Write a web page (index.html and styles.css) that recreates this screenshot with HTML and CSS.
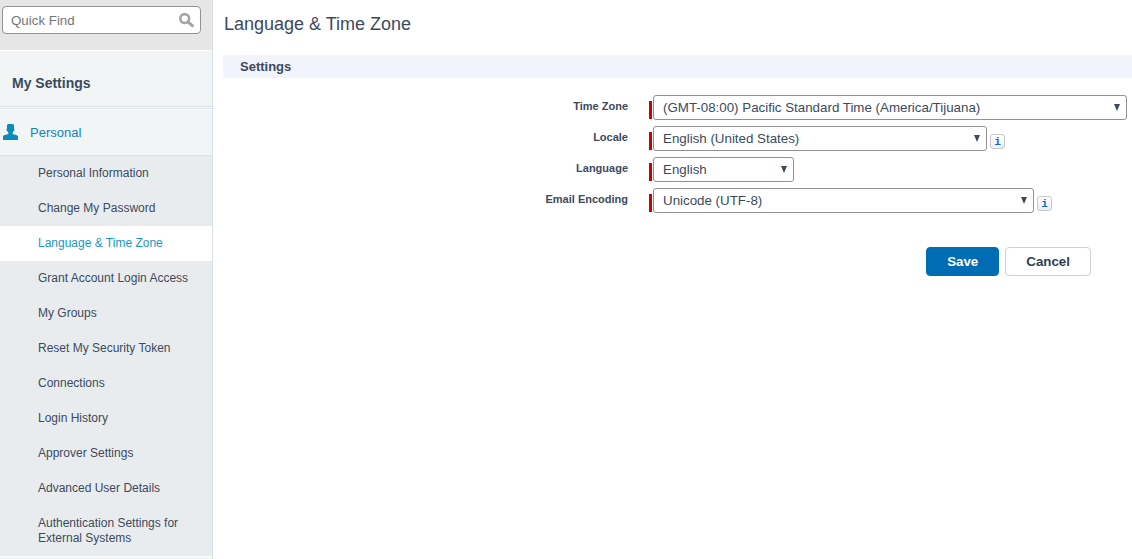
FILE: index.html
```html
<!doctype html>
<html lang="en">
<head>
    <meta charset="UTF-8">
    <meta name="viewport" content="width=device-width, initial-scale=1.0">
    <title>Language &amp; Time Zone</title>
    <link rel="stylesheet" href="styles.css">
</head>
<body>
<div class="page">
    <aside class="sidebar">
        <form class="search">
            <input type="search" class="searchInput" placeholder="Quick Find" aria-label="Quick Find">
            <button type="button" class="searchBtn" aria-label="Search">
                <svg width="16" height="16" viewBox="0 0 16 16">
                    <circle cx="5.7" cy="5.6" r="4.4" fill="none" stroke="#a5a5a5" stroke-width="2.6"/>
                    <path d="M9 8.8L14.4 13.6" stroke="#a5a5a5" stroke-width="3" fill="none"/>
                </svg>
            </button>
        </form>
        <h2 class="sideTitle">My Settings</h2>
        <nav>
            <a href="#" class="group">
                <svg width="15" height="16" viewBox="0 0 15 16">
                    <path d="M5 0H10L11 1V4.5L11.4 5V6.5L10.6 7L9.6 9V10L14 11.2L15 12.2V16H0V12.2L1 11.2L5.4 10V9L4.4 7L3.6 6.5V5L4 4.5V1Z" fill="#0d8abc"/>
                </svg>
                Personal
            </a>
            <ul class="menu">
                <li><a href="#">Personal Information</a></li>
                <li><a href="#">Change My Password</a></li>
                <li><a href="#" class="active">Language &amp; Time Zone</a></li>
                <li><a href="#">Grant Account Login Access</a></li>
                <li><a href="#">My Groups</a></li>
                <li><a href="#">Reset My Security Token</a></li>
                <li><a href="#">Connections</a></li>
                <li><a href="#">Login History</a></li>
                <li><a href="#">Approver Settings</a></li>
                <li><a href="#">Advanced User Details</a></li>
                <li><a href="#">Authentication Settings for External Systems</a></li>
            </ul>
        </nav>
    </aside>
    <main class="content">
        <h1>Language &amp; Time Zone</h1>
        <h3 class="sectionTitle">Settings</h3>
        <form>
            <div class="row">
                <label for="timezone">Time Zone</label>
                <div class="field timezone">
                    <select id="timezone" required>
                        <option>(GMT-08:00) Pacific Standard Time (America/Tijuana)</option>
                    </select>
                </div>
            </div>
            <div class="row">
                <label for="locale">Locale</label>
                <div class="field locale">
                    <select id="locale" required>
                        <option>English (United States)</option>
                    </select>
                </div>
                <button type="button" class="info" aria-label="Locale help">i</button>
            </div>
            <div class="row">
                <label for="language">Language</label>
                <div class="field language">
                    <select id="language" required>
                        <option>English</option>
                    </select>
                </div>
            </div>
            <div class="row">
                <label for="encoding">Email Encoding</label>
                <div class="field encoding">
                    <select id="encoding" required>
                        <option>Unicode (UTF-8)</option>
                    </select>
                </div>
                <button type="button" class="info" aria-label="Email Encoding help">i</button>
            </div>
            <div class="buttons">
                <button type="submit" class="btn save">Save</button>
                <button type="button" class="btn">Cancel</button>
            </div>
        </form>
    </main>
</div>
</body>
</html>
```

FILE: styles.css
```css
*
{
    box-sizing: border-box;
}

body
{
    margin: 0;
    font-family: "Liberation Sans", Arial, sans-serif;
    font-size: 12px;
    color: #3c4a5c;
    background-color: white;
}

a
{
    text-decoration: none;
    color: inherit;
}

h1, h2, h3, ul
{
    margin: 0;
    padding: 0;
}

input, select, button
{
    font-family: inherit;
}

.page
{
    display: flex;
    min-height: 100vh;
}

/* sidebar */
.sidebar
{
    flex: 0 0 213px;
    min-width: 0;
    border-right: 1px solid #d9e2e6;
    background-color: #f1f5f6;
}

.search
{
    display: flex;
    height: 50px;
    padding: 6px 11px 16px 2px;
    background-color: #e6e6e6;
}

.searchInput
{
    flex: 1;
    min-width: 0;
    height: 28px;
    padding: 0 32px 0 8px;
    border: 1px solid #919191;
    border-radius: 4px;
    outline: none;
    background-color: white;
    appearance: none;
}

.searchInput::placeholder
{
    color: #757575;
}

.searchBtn
{
    width: 16px;
    height: 16px;
    margin: 7px 6px 0 -22px;
    padding: 0;
    border: none;
    background: none;
}

.searchBtn svg, .group svg
{
    display: block;
}

.sideTitle
{
    height: 57px;
    padding-left: 12px;
    border-top: 1px solid white;
    border-bottom: 1px solid #d9e2e6;
    font-size: 14px;
    line-height: 64px;
}

.group
{
    display: flex;
    align-items: center;
    gap: 12px;
    height: 47px;
    margin-top: 1px;
    padding-left: 3px;
    border-top: 1px solid #d9e2e6;
    box-shadow: 0 -1px white, inset 0 1px white;
    font-size: 13px;
    color: #0d84c0;
}

.menu
{
    list-style: none;
    border-top: 1px solid #d9e2e6;
    border-bottom: 1px solid white;
    background-color: #e8ecef;
}

.menu a
{
    display: block;
    padding: 10px 12px 10px 38px;
    line-height: 15px;
}

.menu .active
{
    color: #1797c0;
    background-color: white;
}

/* settings form */
.content
{
    flex: 1;
    min-width: 0;
    padding: 13px 0 0 10px;
}

h1
{
    padding-left: 1px;
    font-size: 18px;
    font-weight: normal;
    line-height: 22px;
}

.sectionTitle
{
    margin: 20px 0 17px;
    padding-left: 17px;
    font-size: 13px;
    line-height: 23px;
    background-color: #f1f4fb;
}

.row
{
    display: flex;
    margin-bottom: 6px;
    padding-right: 5px;
}

.row label
{
    flex: 0 0 426px;
    padding-right: 21px;
    font-size: 11px;
    font-weight: bold;
    line-height: 22px;
    text-align: right;
}

.field
{
    position: relative;
    display: flex;
}

/* red mark of a required field */
.field::before
{
    content: "";
    width: 3px;
    height: 18px;
    margin: 6px 1px 0 0;
    background-color: #c00;
}

.field::after
{
    content: "";
    position: absolute;
    top: 9px;
    right: 7px;
    width: 6px;
    height: 7px;
    background-color: #3c4a5c;
    clip-path: polygon(0 0, 100% 0, 50% 100%);
    pointer-events: none;
}

.field select
{
    flex: 1;
    min-width: 0;
    height: 25px;
    padding: 0 20px 0 9px;
    border: 1px solid #919191;
    border-radius: 3px;
    color: #3c4a5c;
    background-color: white;
    appearance: none;
}

.timezone
{
    flex: 1;
}

.locale
{
    width: 338px;
}

.language
{
    width: 145px;
}

.encoding
{
    width: 385px;
}

.info
{
    align-self: flex-end;
    width: 15px;
    height: 15px;
    margin: 0 0 2px 3px;
    padding: 0;
    border: 1px solid #c8c8c8;
    border-radius: 3px;
    font-family: "Liberation Mono", monospace;
    font-size: 11px;
    font-weight: bold;
    line-height: 15px;
    color: #0f6ad6;
    background: linear-gradient(white, #ebeef1);
}

.buttons
{
    display: flex;
    justify-content: flex-end;
    gap: 6px;
    margin-top: 34px;
    padding-right: 41px;
}

.btn
{
    height: 29px;
    padding: 0 20px;
    border: 1px solid #d0d0d0;
    border-radius: 4px;
    font-weight: bold;
    color: #2f3f50;
    background-color: white;
}

.save
{
    border-color: #006cb4;
    color: white;
    background-color: #006cb4;
}
```
